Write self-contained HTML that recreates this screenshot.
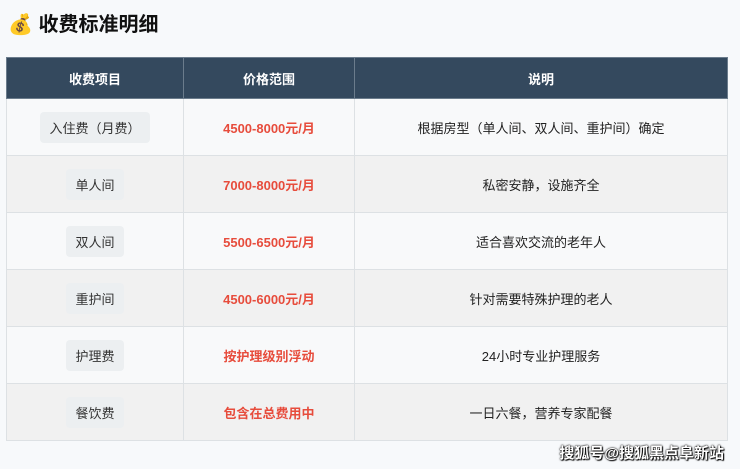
<!DOCTYPE html><html><head><meta charset="utf-8"><style>
body{margin:0;width:740px;height:469px;background:#f7f9fb;font-family:"Liberation Sans","Noto Sans CJK SC",sans-serif;position:relative;overflow:hidden}
h1{position:absolute;left:8px;top:10px;margin:0;font-size:20px;font-weight:bold;color:#111;line-height:30px}
table{position:absolute;left:6px;top:57px;width:722px;border-collapse:collapse;font-size:13px;table-layout:fixed}
th,td{padding:0}
th{background:#34495e;color:#fff;height:40px;font-weight:bold;border:1px solid #6b7c8c;font-size:13px}
td{height:56px;border:1px solid #dde1e4;text-align:center;color:#222}
tr:nth-child(odd) td{background:#f1f1f1}
tr:nth-child(even) td{background:#f8f9fa}
.p{display:inline-block;background:#eceff1;border-radius:4px;padding:6px 9px;color:#333}
.r{color:#e74c3c;font-weight:bold}
.wm{position:absolute;right:16px;top:442px;font-size:15px;font-weight:bold;color:#fff;text-shadow:0 0 2px #000,0 0 1px #000,1px 1px 1px #000}
</style></head><body>
<h1>💰 收费标准明细</h1>
<table>
<tr><th style="width:176px">收费项目</th><th style="width:170px">价格范围</th><th>说明</th></tr>
<tr><td><span class="p">入住费（月费）</span></td><td class="r">4500-8000元/月</td><td>根据房型（单人间、双人间、重护间）确定</td></tr>
<tr><td><span class="p">单人间</span></td><td class="r">7000-8000元/月</td><td>私密安静，设施齐全</td></tr>
<tr><td><span class="p">双人间</span></td><td class="r">5500-6500元/月</td><td>适合喜欢交流的老年人</td></tr>
<tr><td><span class="p">重护间</span></td><td class="r">4500-6000元/月</td><td>针对需要特殊护理的老人</td></tr>
<tr><td><span class="p">护理费</span></td><td class="r">按护理级别浮动</td><td>24小时专业护理服务</td></tr>
<tr><td><span class="p">餐饮费</span></td><td class="r">包含在总费用中</td><td>一日六餐，营养专家配餐</td></tr>
</table>
<div class="wm">搜狐号@搜狐黑点阜新站</div>
</body></html>
